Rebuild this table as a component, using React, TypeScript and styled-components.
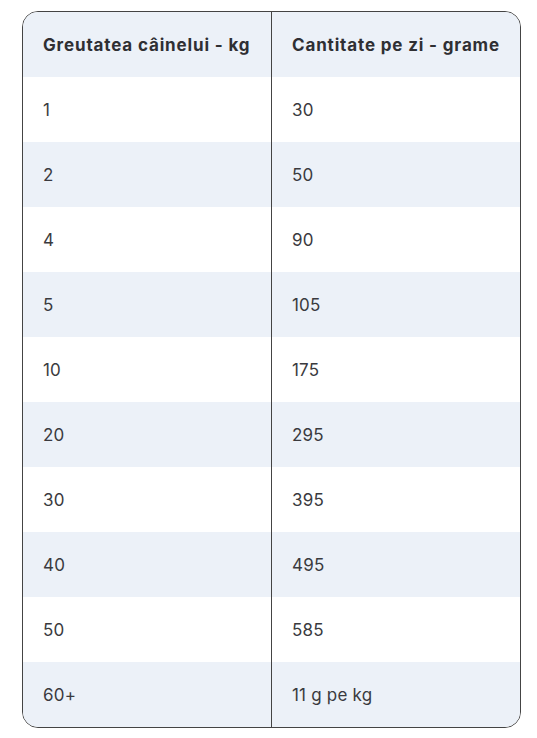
import React from 'react';
import styled, {createGlobalStyle} from 'styled-components';

const GlobalStyle = createGlobalStyle`
  html, body {
    margin: 0;
    padding: 0;
    background: #ffffff;
  }
  body {
    font-family: 'Inter', 'Open Sans', sans-serif;
    color: #333333;
  }
`;

const Page = styled.div`
  padding: 11px 16px 10px 22px;
`;

const TableBox = styled.div`
  width: 497px;
  border: 1px solid #444444;
  border-radius: 16px;
  overflow: hidden;
`;

const Row = styled.div<{$shaded: boolean}>`
  display: grid;
  grid-template-columns: 248px 1fr;
  height: 65px;
  background: ${p => (p.$shaded ? '#ecf1f8' : '#ffffff')};
`;

const Cell = styled.div<{$head?: boolean}>`
  display: flex;
  align-items: center;
  padding: 0 20px;
  font-size: 17px;
  font-weight: ${p => (p.$head ? 700 : 400)};
  color: ${p => (p.$head ? '#2f2f33' : '#3a3a3e')};
  letter-spacing: ${p => (p.$head ? '0.85px' : '0.2px')};

  & + & {
    border-left: 1px solid #444444;
  }
`;

const rows: [string, string][] = [
  ['1', '30'],
  ['2', '50'],
  ['4', '90'],
  ['5', '105'],
  ['10', '175'],
  ['20', '295'],
  ['30', '395'],
  ['40', '495'],
  ['50', '585'],
  ['60+', '11 g pe kg'],
];

const App: React.FC = () => {
  return (
    <Page>
      <GlobalStyle/>
      <TableBox>
        <Row $shaded={true}>
          <Cell $head>Greutatea câinelui - kg</Cell>
          <Cell $head>Cantitate pe zi - grame</Cell>
        </Row>
        {rows.map(([kg, g], i) => (
          <Row key={kg} $shaded={i % 2 === 1}>
            <Cell>{kg}</Cell>
            <Cell>{g}</Cell>
          </Row>
        ))}
      </TableBox>
    </Page>
  );
};

export default App;
